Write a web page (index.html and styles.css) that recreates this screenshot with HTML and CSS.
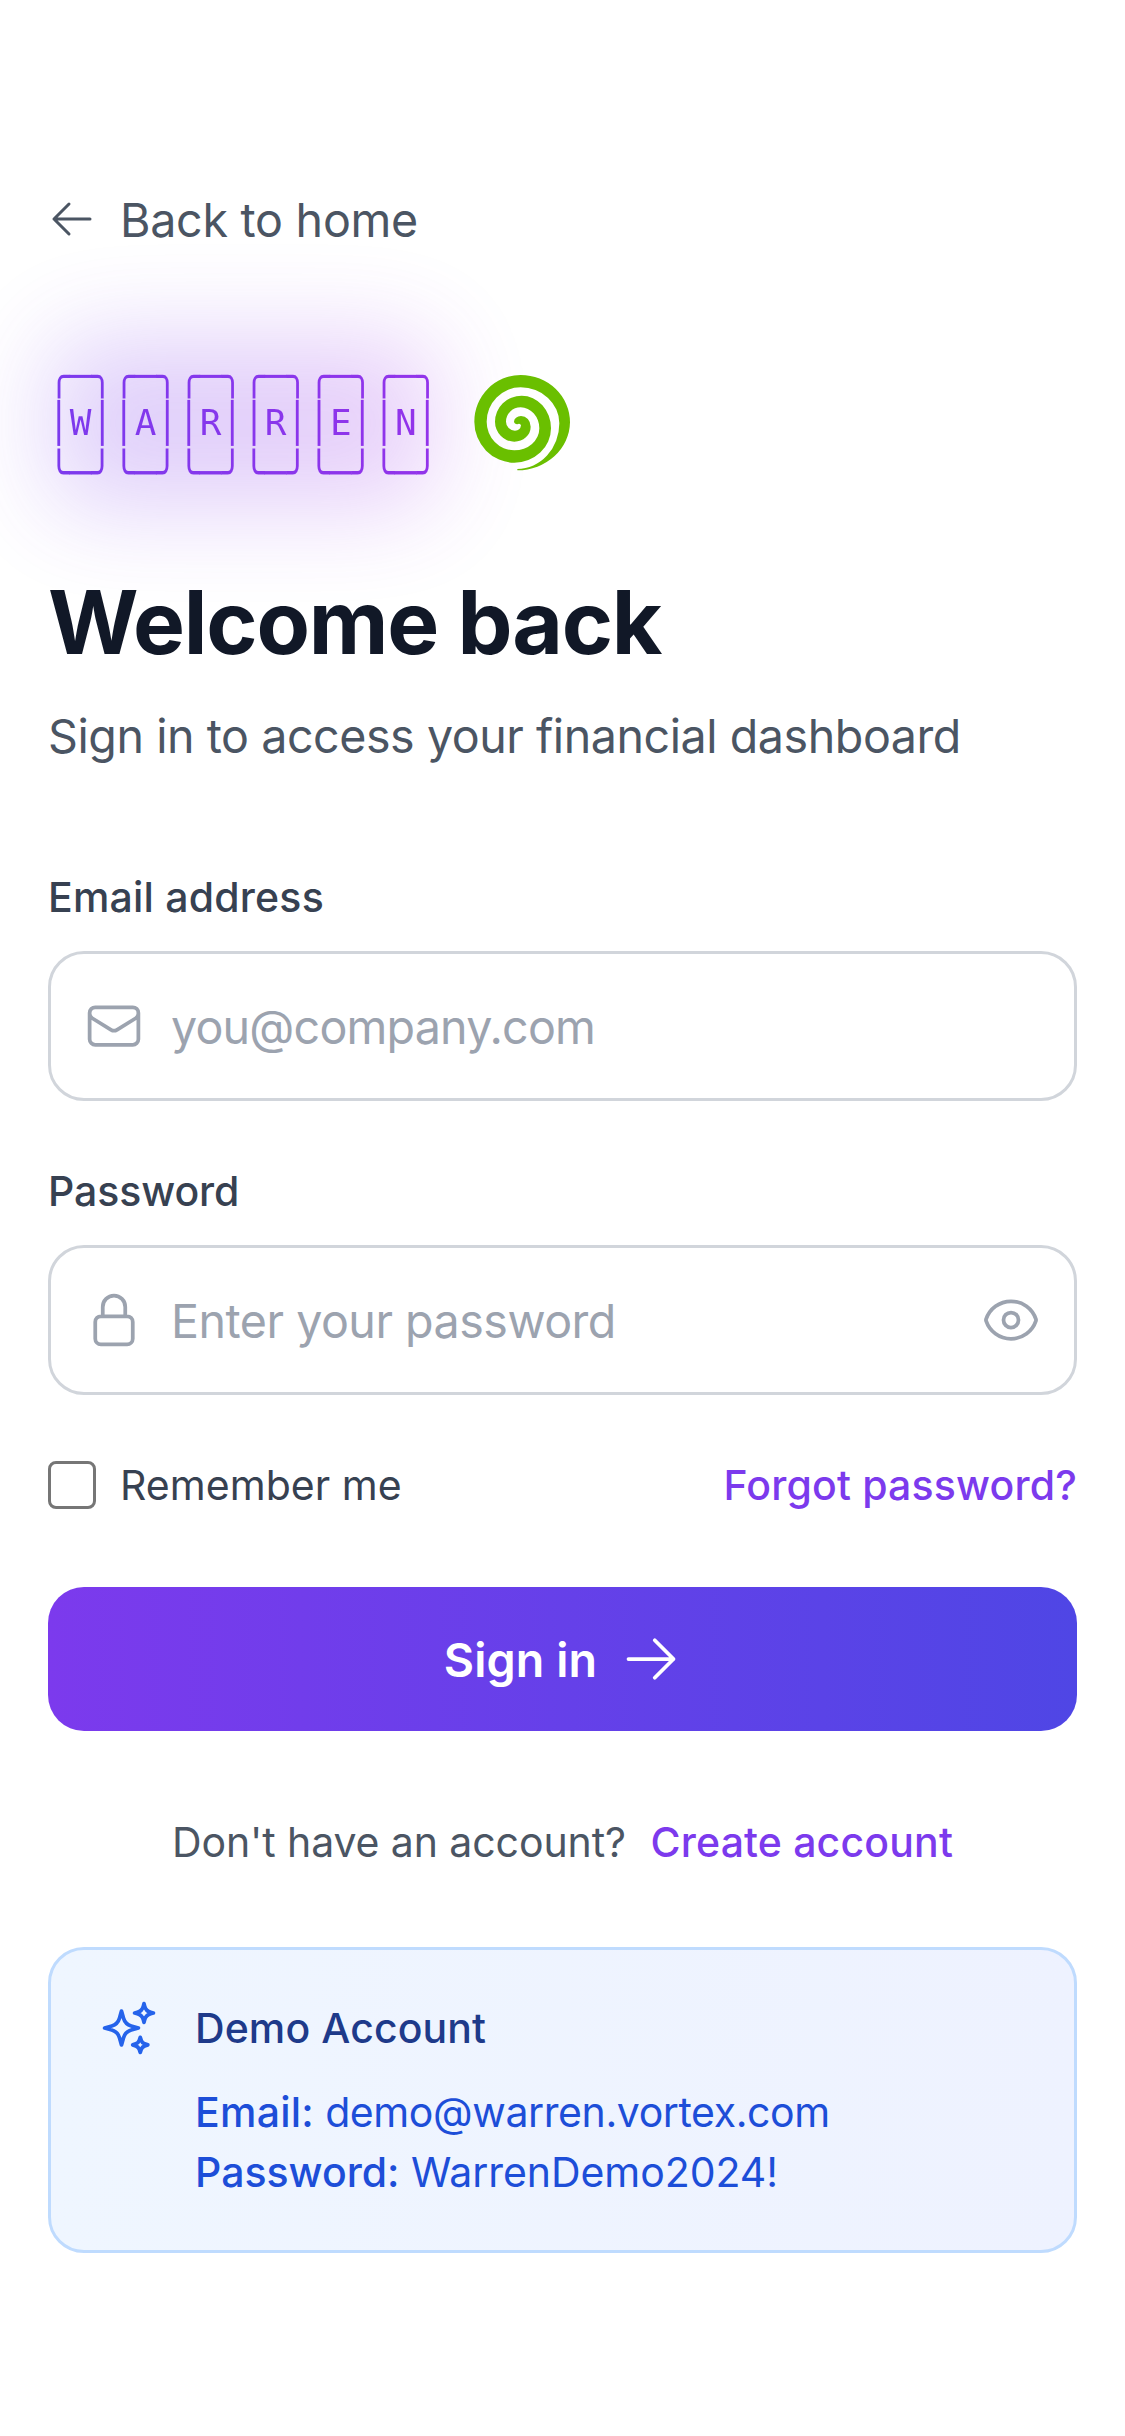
FILE: index.html
```html
<!DOCTYPE html>
<html lang="en">
<head>
<meta charset="utf-8">
<title>Sign in</title>
<link rel="stylesheet" href="styles.css">
</head>
<body>
<main class="page">
  <a class="back" href="#">
    <svg class="icon-sm" viewBox="0 0 24 24"><path d="M10.5 19.5 3 12m0 0 7.5-7.5M3 12h18"/></svg>
    <span>Back to home</span>
  </a>

  <div class="brand">
    <div class="wordmark">
      <div class="glow"></div>
      <pre class="ascii"><span class="row row-top">╭─╮╭─╮╭─╮╭─╮╭─╮╭─╮</span><span class="row"><span class="bar">│</span>W<span class="bar">││</span>A<span class="bar">││</span>R<span class="bar">││</span>R<span class="bar">││</span>E<span class="bar">││</span>N<span class="bar">│</span></span><span class="row row-bottom">╰─╯╰─╯╰─╯╰─╯╰─╯╰─╯</span></pre>
    </div>
    <svg class="spiral" viewBox="42 45 288 288"><path d="M172 331A158 146 0 0 0 330 187A148 142 0 0 0 182 45A139 140 0 0 0 43 185A120 123 0 0 0 163 308A110 103 0 0 0 273 205A88 98 0 0 0 185 107A80 78 0 0 0 105 185A58 60 0 0 0 163 245A49 45 0 0 0 212 200A29 32 0 0 0 183 168A21 17 0 0 0 162 185A9 9 0 0 0 174 192Q181 190 183 196Q181 212 165 212A27 27 0 0 1 138 185A44 43 0 0 1 182 142A56 63 0 0 1 238 205A75 66 0 0 1 163 271A83 86 0 0 1 80 185A102 103 0 0 1 182 82A116 108 0 0 1 298 190A126 137 0 0 1 172 327Z"/></svg>
  </div>

  <h1 class="title">Welcome back</h1>
  <p class="subtitle">Sign in to access your financial dashboard</p>

  <form class="form">
    <div class="field">
      <label class="label" for="email">Email address</label>
      <div class="control">
        <svg class="icon" viewBox="0 0 24 24"><path d="M21.75 6.75v10.5a2.25 2.25 0 0 1-2.25 2.25h-15a2.25 2.25 0 0 1-2.25-2.25V6.75m19.5 0A2.25 2.25 0 0 0 19.5 4.5h-15a2.25 2.25 0 0 0-2.25 2.25m19.5 0v.243a2.25 2.25 0 0 1-1.07 1.916l-7.5 4.615a2.25 2.25 0 0 1-2.36 0L3.32 8.91a2.25 2.25 0 0 1-1.07-1.916V6.75"/></svg>
        <input class="input input-email" id="email" type="email" placeholder="you@company.com">
      </div>
    </div>
    <div class="field">
      <label class="label label-password" for="password">Password</label>
      <div class="control">
        <svg class="icon" viewBox="0 0 24 24"><path d="M16.5 10.5V6.75a4.5 4.5 0 1 0-9 0v3.75m-.75 11.25h10.5a2.25 2.25 0 0 0 2.25-2.25v-6.75a2.25 2.25 0 0 0-2.25-2.25H6.75a2.25 2.25 0 0 0-2.25 2.25v6.75a2.25 2.25 0 0 0 2.25 2.25Z"/></svg>
        <input class="input" id="password" type="password" placeholder="Enter your password">
        <svg class="icon" viewBox="0 0 24 24"><path d="M2.036 12.322a1.012 1.012 0 0 1 0-.639C3.423 7.51 7.36 4.5 12 4.5c4.638 0 8.573 3.007 9.963 7.178.07.207.07.431 0 .639C20.577 16.49 16.64 19.5 12 19.5c-4.638 0-8.573-3.007-9.963-7.178Z"/><path d="M15 12a3 3 0 1 1-6 0 3 3 0 0 1 6 0Z"/></svg>
      </div>
    </div>
    <div class="options">
      <label class="remember"><input class="checkbox" type="checkbox"><span>Remember me</span></label>
      <a class="link" href="#">Forgot password?</a>
    </div>
    <button class="submit" type="button">
      <span>Sign in</span>
      <svg class="icon" viewBox="0 0 24 24"><path d="M13.5 4.5 21 12m0 0-7.5 7.5M21 12H3"/></svg>
    </button>
  </form>

  <p class="signup"><span class="signup-text">Don't have an account?</span> <a class="link" href="#">Create account</a></p>

  <section class="demo">
    <svg class="icon demo-icon" viewBox="0 0 24 24"><path d="M9.813 15.904 9 18.75l-.813-2.846a4.5 4.5 0 0 0-3.09-3.09L2.25 12l2.846-.813a4.5 4.5 0 0 0 3.09-3.09L9 5.25l.813 2.846a4.5 4.5 0 0 0 3.09 3.09L15.75 12l-2.846.813a4.5 4.5 0 0 0-3.09 3.09ZM18.259 8.715 18 9.75l-.259-1.035a3.375 3.375 0 0 0-2.455-2.456L14.25 6l1.036-.259a3.375 3.375 0 0 0 2.455-2.456L18 2.25l.259 1.035a3.375 3.375 0 0 0 2.456 2.456L21.75 6l-1.035.259a3.375 3.375 0 0 0-2.456 2.456ZM16.894 20.567 16.5 21.75l-.394-1.183a2.25 2.25 0 0 0-1.423-1.423L13.5 18.75l1.183-.394a2.25 2.25 0 0 0 1.423-1.423l.394-1.183.394 1.183a2.25 2.25 0 0 0 1.423 1.423l1.183.394-1.183.394a2.25 2.25 0 0 0-1.423 1.423Z"/></svg>
    <div class="demo-body">
      <h2 class="demo-title">Demo Account</h2>
      <div class="demo-lines">
        <p class="demo-email"><b>Email:</b> demo@warren.vortex.com</p>
        <p><b>Password:</b> WarrenDemo2024!</p>
      </div>
    </div>
  </section>
</main>
</body>
</html>
```
FILE: styles.css
```css
* { box-sizing: border-box; margin: 0; padding: 0; }

body {
  background: #fff;
  font-family: Inter, "Liberation Sans", sans-serif;
  font-size: 46.6px;
  line-height: 72px;
  letter-spacing: -0.45px;
  color: #4b5563;
  min-height: 2436px;
  overflow-x: hidden;
}

a { text-decoration: none; color: inherit; }

svg { flex: none; fill: none; stroke: currentColor; stroke-width: 1.5; stroke-linecap: round; stroke-linejoin: round; }
.icon { width: 60px; height: 60px; }
.icon-sm { width: 48px; height: 48px; }

.page { padding: 183px 48px 0; }

.back { display: flex; align-items: center; gap: 24px; height: 72px; letter-spacing: -.27px; }
.back span { padding-top: 2px; }

.brand { display: flex; align-items: center; gap: 36px; margin-top: 96px; height: 144px; }
.wordmark { position: relative; }
.glow {
  position: absolute;
  inset: -14px 2px;
  border-radius: 36px;
  background: linear-gradient(90deg, #783eed, #8433ea 50%, #a63cea);
  opacity: .23;
  filter: blur(48px);
}
.ascii {
  position: relative;
  font: 36px/48px "DejaVu Sans Mono", monospace;
  letter-spacing: 0;
}
.row {
  display: block;
  height: 48px;
  background: linear-gradient(90deg, #7c3aed, #9333ea);
  -webkit-background-clip: text;
  background-clip: text;
  color: transparent;
}
.row-top { transform: translateY(1.5px) scaleY(1.03); }
.row-bottom { transform: translateY(2.4px) scaleY(1.14); }
.bar { display: inline-block; height: 48px; vertical-align: top; transform: scaleY(1.077); color: #7c3aed; }
.bar:nth-child(2) { color: #8039ed; }
.bar:nth-child(3) { color: #8438ec; }
.bar:nth-child(4) { color: #8837ec; }
.bar:nth-child(5) { color: #8b35eb; }
.bar:nth-child(6) { color: #8f34eb; }
.bar:nth-child(7) { color: #9333ea; }
.spiral { position: relative; width: 96px; height: 96px; fill: #6abf00; stroke: none; }

.title { margin-top: 72px; padding-top: 1px; height: 108px; font-size: 87.3px; line-height: 108px; font-weight: 700; letter-spacing: -1.2px; color: #111827; }
.subtitle { margin-top: 24px; padding-top: 1px; height: 72px; }

.form { display: flex; flex-direction: column; margin-top: 96px; gap: 60px; }
.field { display: flex; flex-direction: column; gap: 24px; }
.label { font-size: 41px; line-height: 60px; font-weight: 500; letter-spacing: .2px; color: #374151; }
.label-password { letter-spacing: -.1px; }
.control {
  display: flex;
  align-items: center;
  gap: 27px;
  height: 150px;
  padding: 0 33px;
  border: 3px solid #d1d5db;
  border-radius: 36px;
  color: #9ca3af;
}
.input { flex: 1; min-width: 0; height: 74px; padding-top: 2px; border: 0; outline: 0; background: none; font: inherit; letter-spacing: -.5px; color: #111827; }
.input-email { letter-spacing: -.8px; }
.input::placeholder { color: #9ca3af; opacity: 1; }

.options { display: flex; justify-content: space-between; align-items: center; height: 60px; font-size: 41px; line-height: 60px; letter-spacing: .05px; }
.remember { display: flex; align-items: center; gap: 24px; color: #374151; }
.checkbox { appearance: none; width: 48px; height: 48px; border: 3px solid #767676; border-radius: 8px; background: #fff; }
.link { font-size: 41px; font-weight: 500; letter-spacing: .17px; color: #7c3aed; }

.submit {
  display: flex;
  align-items: center;
  justify-content: center;
  gap: 24px;
  height: 144px;
  margin-top: 12px;
  border: 0;
  border-radius: 36px;
  background: linear-gradient(90deg, #7c3aed, #4f46e5);
  color: #fff;
  font: 600 46.6px/72px Inter, "Liberation Sans", sans-serif;
  letter-spacing: .1px;
}
.submit span { padding-top: 1px; }

.signup { margin-top: 72px; padding-top: 1px; height: 72px; text-align: center; word-spacing: 12px; }
.signup-text { font-size: 41px; letter-spacing: -.1px; }
.signup-text, .signup .link { word-spacing: 0; }

.demo {
  display: flex;
  gap: 36px;
  margin-top: 72px;
  padding: 48px;
  border: 3px solid #bfdbfe;
  border-radius: 36px;
  background: linear-gradient(90deg, #eff6ff, #eef2ff);
  font-size: 41px;
  line-height: 60px;
  letter-spacing: -.05px;
  color: #1d4ed8;
}
.demo-icon { color: #2563eb; }
.demo-body { display: flex; flex-direction: column; gap: 24px; }
.demo-title { font-size: 41px; font-weight: 500; letter-spacing: .1px; color: #1e3a8a; }
.demo-email { letter-spacing: -.4px; }
.demo-lines b { font-weight: 500; letter-spacing: 0; }
.demo-email b { letter-spacing: .25px; }
```
